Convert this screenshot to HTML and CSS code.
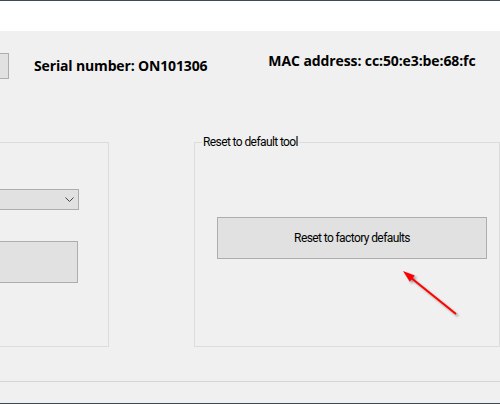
FILE: index.html
```html
<html>
    <head>
        <link rel="stylesheet" href="styles.css">
    </head>
    <body>
        <div class="window">
            <div class="titlebar"></div>

            <div class="info">
                <button class="btn stub"></button>
                <span class="serial">Serial number: ON101306</span>
                <span class="mac">MAC address: cc:50:e3:be:68:fc</span>
            </div>

            <div class="groups">
                <div class="group group-left">
                    <div class="combo">
                        <svg class="chevron" width="9" height="5" viewBox="0 0 9 5">
                            <polyline points="0.5,0.5 4.5,4.5 8.5,0.5" fill="none" stroke="#444" stroke-width="1"/>
                        </svg>
                    </div>
                    <button class="btn btn-wide"></button>
                </div>

                <div class="group group-reset">
                    <span class="group-title">Reset to default tool</span>
                    <button class="btn btn-reset">Reset to factory defaults</button>
                </div>
            </div>

            <div class="statusbar"></div>

            <!-- red annotation arrow drawn over the window -->
            <svg class="arrow" width="500" height="404" viewBox="0 0 500 404">
                <g class="arrow-shape">
                    <line x1="456" y1="314" x2="410" y2="277" stroke="#ff0000" stroke-width="2"/>
                    <polygon points="403,271 409.8,281.7 414.8,275.5" fill="#ff0000"/>
                </g>
            </svg>
        </div>
    </body>
</html>
```

FILE: styles.css
```css
html, body {
    margin: 0;
    padding: 0;
}
body {
    width: 500px;
    height: 404px;
    overflow: hidden;
    background-color: #f0f0f0;
    font-family: "Open Sans", "Noto Sans", sans-serif;
    color: #000;
}
.window {
    position: relative;
    height: 404px;
    box-sizing: border-box;
    border-top: 1px solid #3c4b58;
    border-bottom: 1px solid #3c4b58;
}
.titlebar {
    height: 30px;
    background-color: #ffffff;
}

/* device info row */
.info {
    display: flex;
    align-items: flex-start;
    height: 111px;
    box-sizing: border-box;
    padding-top: 22px;
}
.serial, .mac {
    font-size: 14px;
    font-weight: bold;
    line-height: 19px;
    letter-spacing: -0.15px;
    white-space: nowrap;
}
.serial {
    margin-left: 25px;
    margin-top: 3px;
}
.mac {
    margin-left: 61px;
    margin-top: -2px;
    letter-spacing: -0.1px;
}

.btn {
    display: block;
    box-sizing: border-box;
    background-color: #e1e1e1;
    border: 1px solid #adadad;
    border-radius: 0;
    padding: 0;
    margin: 0;
    font-family: Roboto, "Open Sans", sans-serif;
    font-size: 12px;
    letter-spacing: -0.6px;
    color: #000;
}
.stub {
    width: 30px;
    height: 26px;
    margin-left: -21px;
}

/* group boxes */
.groups {
    display: flex;
    height: 205px;
}
.group {
    position: relative;
    box-sizing: border-box;
    height: 205px;
    border: 1px solid #dcdcdc;
}
.group-left {
    width: 201px;
    margin-left: -92px;
    display: flex;
    flex-direction: column;
    align-items: flex-end;
    padding-top: 46px;
}
.group-reset {
    width: 320px;
    margin-left: 85px;
    padding-top: 74px;
    padding-left: 22px;
}
.group-title {
    position: absolute;
    top: -9px;
    left: 7px;
    padding: 0 1px;
    background-color: #f0f0f0;
    font-family: Roboto, "Open Sans", sans-serif;
    font-size: 12px;
    letter-spacing: -0.6px;
    line-height: 16px;
    white-space: nowrap;
}

.combo {
    display: flex;
    align-items: center;
    justify-content: flex-end;
    box-sizing: border-box;
    width: 170px;
    height: 21px;
    margin-right: 29px;
    padding-right: 4px;
    background-color: #e1e1e1;
    border: 1px solid #adadad;
}
.btn-wide {
    width: 170px;
    height: 42px;
    margin-top: 31px;
    margin-right: 30px;
}
.btn-reset {
    width: 270px;
    height: 42px;
}

.statusbar {
    margin-top: 34px;
    border-top: 1px solid #d5d5d5;
}

.arrow {
    position: absolute;
    left: 0;
    top: -1px;
    pointer-events: none;
}
.arrow-shape {
    filter: drop-shadow(2px 2px 1px rgba(0, 0, 0, 0.35));
}
```
